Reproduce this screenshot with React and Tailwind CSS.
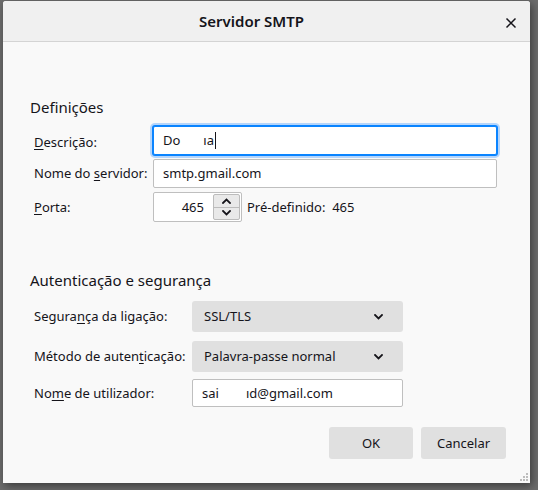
import React from "react";

function Chevron({ up = false, className = "" }) {
  return (
    <svg width="9" height="6" viewBox="0 0 9 6" className={className}>
      <path
        d={up ? "M1 5 L4.5 1.5 L8 5" : "M1 1 L4.5 4.5 L8 1"}
        fill="none"
        stroke="#15141a"
        strokeWidth="1.8"
        strokeLinecap="square"
      />
    </svg>
  );
}

function U({ children }) {
  return <span className="underline decoration-1 underline-offset-[2px]">{children}</span>;
}

function Select({ value }) {
  return (
    <div className="w-[211px] h-[31px] rounded-[3px] bg-[#e0e0e0] flex items-center pl-[12px] pr-[20px] justify-between">
      <span>{value}</span>
      <Chevron />
    </div>
  );
}

export default function App() {
  return (
    <div className="w-[538px] h-[490px] bg-[#6c6c6c] overflow-hidden font-['Noto_Sans',sans-serif] text-[13px] text-[#15141a] leading-none">
      <div className="relative ml-[3px] mt-[1px] w-[527px] h-[482px] bg-[#f9f9f9] rounded-tl-[3px] rounded-tr-[3px] shadow-[2px_3px_8px_rgba(0,0,0,0.45)] flex flex-col">
        {/* title bar */}
        <div className="h-[41px] shrink-0 bg-[#f0f0f0] border-b border-[#d4d4d4] rounded-t-[3px] flex items-center justify-center pr-[30px]">
          <span className="text-[15px] font-semibold">Servidor SMTP</span>
        </div>
        <div className="absolute right-[13px] top-[16px] w-[12px] h-[12px]">
          <svg width="12" height="12" viewBox="0 0 12 12">
            <path d="M1.5 1.5 L10.5 10.5 M10.5 1.5 L1.5 10.5" stroke="#15141a" strokeWidth="1.5" />
          </svg>
        </div>

        {/* body */}
        <div className="flex flex-col pl-[27px] pr-[30px]">
          <div className="mt-[55px] text-[15px] h-[20px] flex items-center">Definições</div>

          <div className="mt-[9px] flex flex-col gap-[4px] pl-[4px]">
            <div className="flex items-center h-[29px]">
              <div className="w-[119px] pt-[3px]"><U>D</U>escrição:</div>
              <div className="w-[344px] h-[29px] bg-white border border-[#0a84ff] rounded-[2px] shadow-[0_0_0_1px_#0a84ff,0_0_0_3px_#b5d5fb] flex items-center pl-[9px]">
                <span>Do</span>
                <span className="inline-block w-[23px]"></span>
                <span>ıa</span>
                <span className="inline-block w-[1px] h-[17px] bg-[#15141a] ml-[1px]"></span>
              </div>
            </div>
            <div className="flex items-center h-[29px]">
              <div className="w-[119px]">Nome do <U>s</U>ervidor:</div>
              <div className="w-[344px] h-[29px] bg-white border border-[#bfbfbf] rounded-[2px] flex items-center pl-[9px]">
                smtp.gmail.com
              </div>
            </div>
            <div className="flex items-center h-[30px]">
              <div className="w-[119px]"><U>P</U>orta:</div>
              <div className="w-[89px] h-[30px] bg-white border border-[#bfbfbf] rounded-[2px] flex items-center">
                <div className="w-[60px] text-right pr-[10px]">465</div>
                <div className="w-[27px] h-[26px] ml-[-1px] border border-[#bcbcbc] bg-[#e9e9e9] rounded-[2px] flex flex-col">
                  <div className="flex-1 flex items-center justify-center border-b border-[#bcbcbc]">
                    <Chevron up />
                  </div>
                  <div className="flex-1 flex items-center justify-center">
                    <Chevron />
                  </div>
                </div>
              </div>
              <div className="ml-[5px]">Pré-definido:&nbsp; 465</div>
            </div>
          </div>

          <div className="mt-[48px] text-[15px] h-[20px] flex items-center">Autenticação e segurança</div>

          <div className="mt-[11px] flex flex-col pl-[4px]">
            <div className="flex items-center">
              <div className="w-[158px]">Segura<U>n</U>ça da ligação:</div>
              <Select value="SSL/TLS" />
            </div>
            <div className="flex items-center mt-[9px]">
              <div className="w-[158px]">Método de auten<U>t</U>icação:</div>
              <Select value="Palavra-passe normal" />
            </div>
            <div className="flex items-center mt-[7px]">
              <div className="w-[158px]">No<U>m</U>e de utilizador:</div>
              <div className="w-[211px] h-[28px] bg-white border border-[#bfbfbf] rounded-[2px] flex items-center pl-[9px]">
                <span>sai</span>
                <span className="inline-block w-[27px]"></span>
                <span>ıd@gmail.com</span>
              </div>
            </div>
          </div>

          <div className="mt-[20px] flex justify-end gap-[8px] mr-[-6px]">
            <div className="w-[84px] h-[32px] rounded-[3px] bg-[#e0e0e0] flex items-center justify-center">OK</div>
            <div className="w-[85px] h-[32px] rounded-[3px] bg-[#e0e0e0] flex items-center justify-center">Cancelar</div>
          </div>
        </div>

        {/* resize grip */}
        <div className="absolute right-[2px] bottom-[2px] w-[8px] h-[8px]">
          <svg width="8" height="8" viewBox="0 0 8 8">
            <rect x="6" y="0" width="2" height="2" fill="#bdbdbd" />
            <rect x="3" y="3" width="2" height="2" fill="#bdbdbd" />
            <rect x="6" y="3" width="2" height="2" fill="#bdbdbd" />
            <rect x="0" y="6" width="2" height="2" fill="#bdbdbd" />
            <rect x="3" y="6" width="2" height="2" fill="#bdbdbd" />
            <rect x="6" y="6" width="2" height="2" fill="#bdbdbd" />
          </svg>
        </div>
      </div>
    </div>
  );
}
